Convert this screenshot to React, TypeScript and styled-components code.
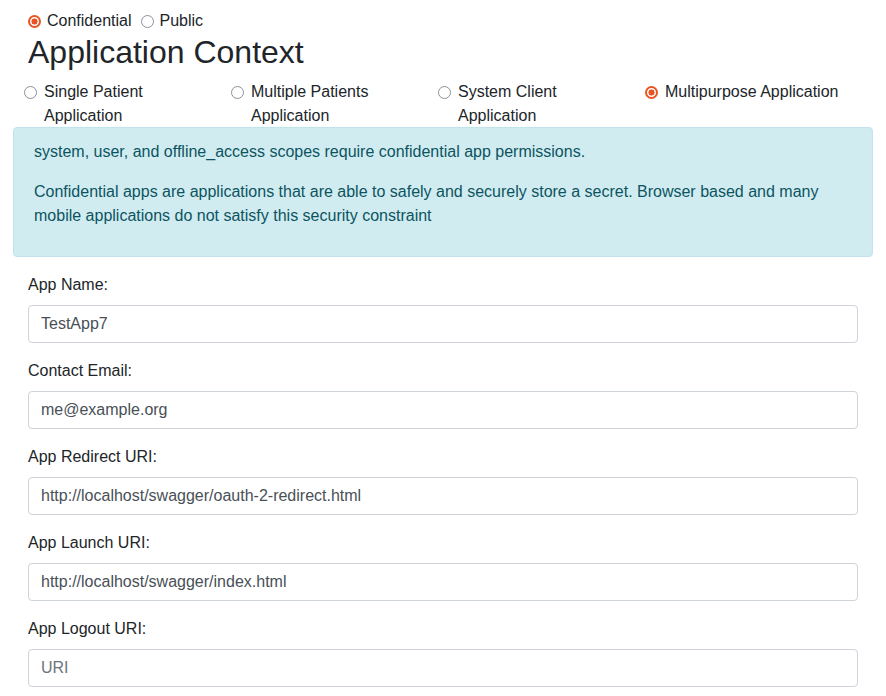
import React from "react";
import styled, { createGlobalStyle } from "styled-components";

const Global = createGlobalStyle`
  html, body { margin: 0; padding: 0; background: #fff; }
  body {
    font-family: "Liberation Sans", Arial, sans-serif;
    font-size: 16px;
    line-height: 24px;
    color: #212529;
  }
  * { box-sizing: border-box; }
`;

const Page = styled.div`
  padding: 9px 13px 0 13px;
`;

const Section = styled.div`
  padding: 0 15px;
`;

const InlineGroup = styled.div`
  display: flex;
  align-items: center;
  height: 24px;
`;

const RadioInput = styled.span<{ $checked?: boolean }>`
  display: inline-block;
  width: 13px;
  height: 13px;
  border-radius: 50%;
  flex: none;
  border: ${(p) => (p.$checked ? "2px solid #e95420" : "1.5px solid #8f8f9d")};
  background: ${(p) =>
    p.$checked
      ? "radial-gradient(circle, #e95420 0 2.8px, #fff 3.3px)"
      : "#fff"};
`;

const InlineLabel = styled.label`
  display: inline-flex;
  align-items: center;
  gap: 6px;
  margin-right: 9px;
`;

const Title = styled.h2`
  margin: 0 0 9px;
  font-size: 32px;
  font-weight: 500;
  line-height: 38px;
  height: 38px;
`;

const ContextRow = styled.div`
  display: grid;
  grid-template-columns: repeat(4, 207px);
  padding-left: 11px;
  margin-bottom: -1px;
`;

const CheckOption = styled.label`
  display: flex;
  align-items: flex-start;
`;

const CheckRadio = styled(RadioInput)`
  margin-top: 6px;
  margin-right: 7px;
`;

const ContextText = styled.span`
  max-width: 178px;
`;

const Alert = styled.div`
  position: relative;
  background: #d1ecf1;
  border: 1px solid #bee5eb;
  color: #0c5460;
  border-radius: 4px;
  padding: 12px 20px;
  margin-bottom: 16px;
  p { margin: 0 0 16px; }
`;

const FormGroup = styled.div`
  margin-bottom: 16px;
`;

const Label = styled.label`
  display: block;
  margin-bottom: 8px;
`;

const Input = styled.input`
  display: block;
  width: 100%;
  height: 38px;
  padding: 6px 12px;
  font-family: inherit;
  font-size: 16px;
  line-height: 24px;
  color: #495057;
  background: #fff;
  border: 1px solid #ced4da;
  border-radius: 4px;
  outline: none;
  &::placeholder { color: #6c757d; opacity: 1; }
`;

const contexts = [
  { text: "Single Patient Application", checked: false },
  { text: "Multiple Patients Application", checked: false },
  { text: "System Client Application", checked: false },
  { text: "Multipurpose Application", checked: true },
];

const fields = [
  { label: "App Name:", value: "TestApp7" },
  { label: "Contact Email:", value: "me@example.org" },
  { label: "App Redirect URI:", value: "http://localhost/swagger/oauth-2-redirect.html" },
  { label: "App Launch URI:", value: "http://localhost/swagger/index.html" },
  { label: "App Logout URI:", value: "", placeholder: "URI" },
];

export default function App() {
  return (
    <>
      <Global />
      <Page>
        <Section>
          <InlineGroup>
            <InlineLabel>
              <RadioInput $checked />
              Confidential
            </InlineLabel>
            <InlineLabel>
              <RadioInput />
              Public
            </InlineLabel>
          </InlineGroup>
          <Title>Application Context</Title>
        </Section>
        <ContextRow>
          {contexts.map((c) => (
            <CheckOption key={c.text}>
              <CheckRadio $checked={c.checked} />
              <ContextText>{c.text}</ContextText>
            </CheckOption>
          ))}
        </ContextRow>
        <Alert>
          <p>system, user, and offline_access scopes require confidential app permissions.</p>
          <p>
            Confidential apps are applications that are able to safely and securely store a secret.
            Browser based and many mobile applications do not satisfy this security constraint
          </p>
        </Alert>
        <Section>
          {fields.map((f) => (
            <FormGroup key={f.label}>
              <Label>{f.label}</Label>
              <Input defaultValue={f.value} placeholder={f.placeholder} readOnly />
            </FormGroup>
          ))}
        </Section>
      </Page>
    </>
  );
}
